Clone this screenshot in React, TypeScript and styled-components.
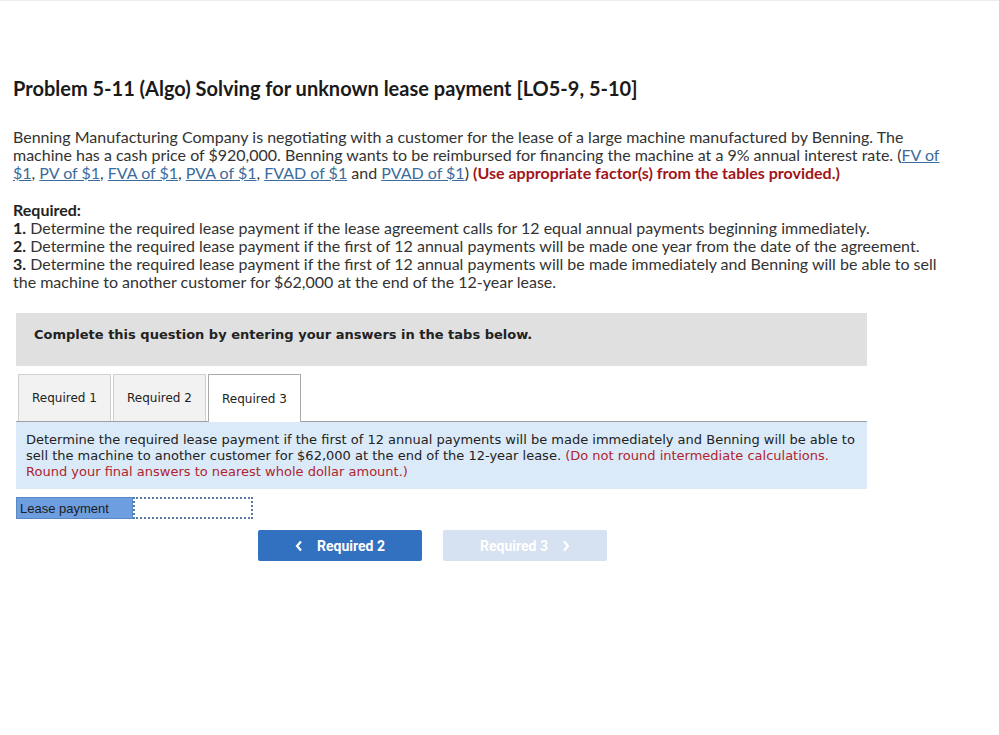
import React from "react";
import styled, { createGlobalStyle } from "styled-components";

const Global = createGlobalStyle`
  html, body { margin: 0; padding: 0; background: #fff; }
  body { border-top: 1px solid #ececec; }
`;

const Page = styled.div`
  padding: 75px 13px 0 13px;
  font-family: Lato, "Open Sans", sans-serif;
  color: #222;
`;

const Title = styled.h1`
  margin: 0;
  font-size: 20px;
  line-height: 24px;
  font-weight: 700;
  color: #1a1a1a;
`;

const Para = styled.p`
  margin: 28px 0 0 0;
  max-width: 940px;
  font-size: 16px;
  line-height: 18px;
  color: #333;
`;

const Link = styled.a`
  color: #3d6b9b;
  text-decoration: underline;
`;

const Strong = styled.b<{ $red?: boolean }>`
  font-weight: 700;
  color: ${(p) => (p.$red ? "#a01519" : "#222")};
`;

const ReqBlock = styled.div`
  margin-top: 19px;
  max-width: 940px;
  font-size: 16px;
  line-height: 18px;
  color: #333;
`;

const Work = styled.div`
  margin: 22px 0 0 3px;
  width: 851px;
  font-family: "DejaVu Sans", Verdana, sans-serif;
`;

const Instruction = styled.div`
  background: #e0e0e0;
  height: 53px;
  box-sizing: border-box;
  padding: 14px 0 0 18px;
  font-size: 13px;
  line-height: 16px;
  font-weight: 700;
  color: #222;
`;

const TabBar = styled.div`
  margin-top: 8px;
  display: flex;
  gap: 2px;
  padding-left: 2px;
`;

const Tab = styled.div<{ $active?: boolean }>`
  width: 93px;
  box-sizing: border-box;
  display: flex;
  align-items: center;
  justify-content: center;
  font-size: 12px;
  color: #222;
  background: ${(p) => (p.$active ? "#fff" : "#f2f2f2")};
  border: 1px solid ${(p) => (p.$active ? "#aaa" : "#d0d0d0")};
  border-bottom: none;
  margin-bottom: ${(p) => (p.$active ? "-1px" : "0")};
  height: ${(p) => (p.$active ? "48px" : "47px")};
  position: relative;
  z-index: ${(p) => (p.$active ? 1 : 0)};
`;

const Panel = styled.div`
  background: #dbeaf8;
  border-top: 1px solid #a0a0a0;
  padding: 10px 10px 9px 10px;
  font-size: 13px;
  line-height: 16px;
  color: #222;
`;

const RedNote = styled.span`
  color: #b0242e;
`;

const AnswerRow = styled.div`
  margin-top: 8px;
  display: flex;
  height: 22px;
`;

const Label = styled.div`
  width: 117px;
  box-sizing: border-box;
  background: #6d9fe0;
  border: 1px solid #5a88c4;
  font-family: "Liberation Sans", Arial, sans-serif;
  font-size: 13px;
  color: #1c1c1c;
  display: flex;
  align-items: center;
  padding-left: 3px;
`;

const Input = styled.input`
  width: 120px;
  box-sizing: border-box;
  height: 22px;
  border: 2px dotted #5a78a8;
  background: #fff;
  outline: none;
  margin: 0;
`;

const Nav = styled.div`
  margin-top: 11px;
  display: flex;
  gap: 21px;
  padding-left: 242px;
`;

const NavButton = styled.button<{ $disabled?: boolean }>`
  width: 164px;
  height: 31px;
  border: none;
  border-radius: 2px;
  background: ${(p) => (p.$disabled ? "#d6e2f1" : "#3171bf")};
  color: #fff;
  font-family: Roboto, sans-serif;
  font-weight: 700;
  font-size: 14px;
  display: flex;
  align-items: center;
  justify-content: center;
  gap: 14px;
  padding: 0;
`;

const Chevron = ({ dir }: { dir: "left" | "right" }) => (
  <svg width="8" height="12" viewBox="0 0 8 12">
    <path
      d={dir === "left" ? "M6 1.5 L2 6 L6 10.5" : "M2 1.5 L6 6 L2 10.5"}
      fill="none"
      stroke="#fff"
      strokeWidth="2.2"
    />
  </svg>
);

export default function App() {
  return (
    <>
      <Global />
      <Page>
        <Title>Problem 5-11 (Algo) Solving for unknown lease payment [LO5-9, 5-10]</Title>
        <Para>
          Benning Manufacturing Company is negotiating with a customer for the lease of a large machine
          manufactured by Benning. The machine has a cash price of $920,000. Benning wants to be reimbursed
          for financing the machine at a 9% annual interest rate. (<Link>FV of $1</Link>,{" "}
          <Link>PV of $1</Link>, <Link>FVA of $1</Link>, <Link>PVA of $1</Link>, <Link>FVAD of $1</Link> and{" "}
          <Link>PVAD of $1</Link>) <Strong $red>(Use appropriate factor(s) from the tables provided.)</Strong>
        </Para>
        <ReqBlock>
          <Strong>Required:</Strong>
          <br />
          <Strong>1.</Strong> Determine the required lease payment if the lease agreement calls for 12 equal
          annual payments beginning immediately.
          <br />
          <Strong>2.</Strong> Determine the required lease payment if the first of 12 annual payments will be
          made one year from the date of the agreement.
          <br />
          <Strong>3.</Strong> Determine the required lease payment if the first of 12 annual payments will be
          made immediately and Benning will be able to sell the machine to another customer for $62,000 at
          the end of the 12-year lease.
        </ReqBlock>
        <Work>
          <Instruction>Complete this question by entering your answers in the tabs below.</Instruction>
          <TabBar>
            <Tab>Required 1</Tab>
            <Tab>Required 2</Tab>
            <Tab $active>Required 3</Tab>
          </TabBar>
          <Panel>
            Determine the required lease payment if the first of 12 annual payments will be made immediately
            and Benning will be able to sell the machine to another customer for $62,000 at the end of the
            12-year lease.{" "}
            <RedNote>
              (Do not round intermediate calculations. Round your final answers to nearest whole dollar
              amount.)
            </RedNote>
          </Panel>
          <AnswerRow>
            <Label>Lease payment</Label>
            <Input />
          </AnswerRow>
          <Nav>
            <NavButton>
              <Chevron dir="left" />
              Required 2
            </NavButton>
            <NavButton $disabled>
              Required 3
              <Chevron dir="right" />
            </NavButton>
          </Nav>
        </Work>
      </Page>
    </>
  );
}
